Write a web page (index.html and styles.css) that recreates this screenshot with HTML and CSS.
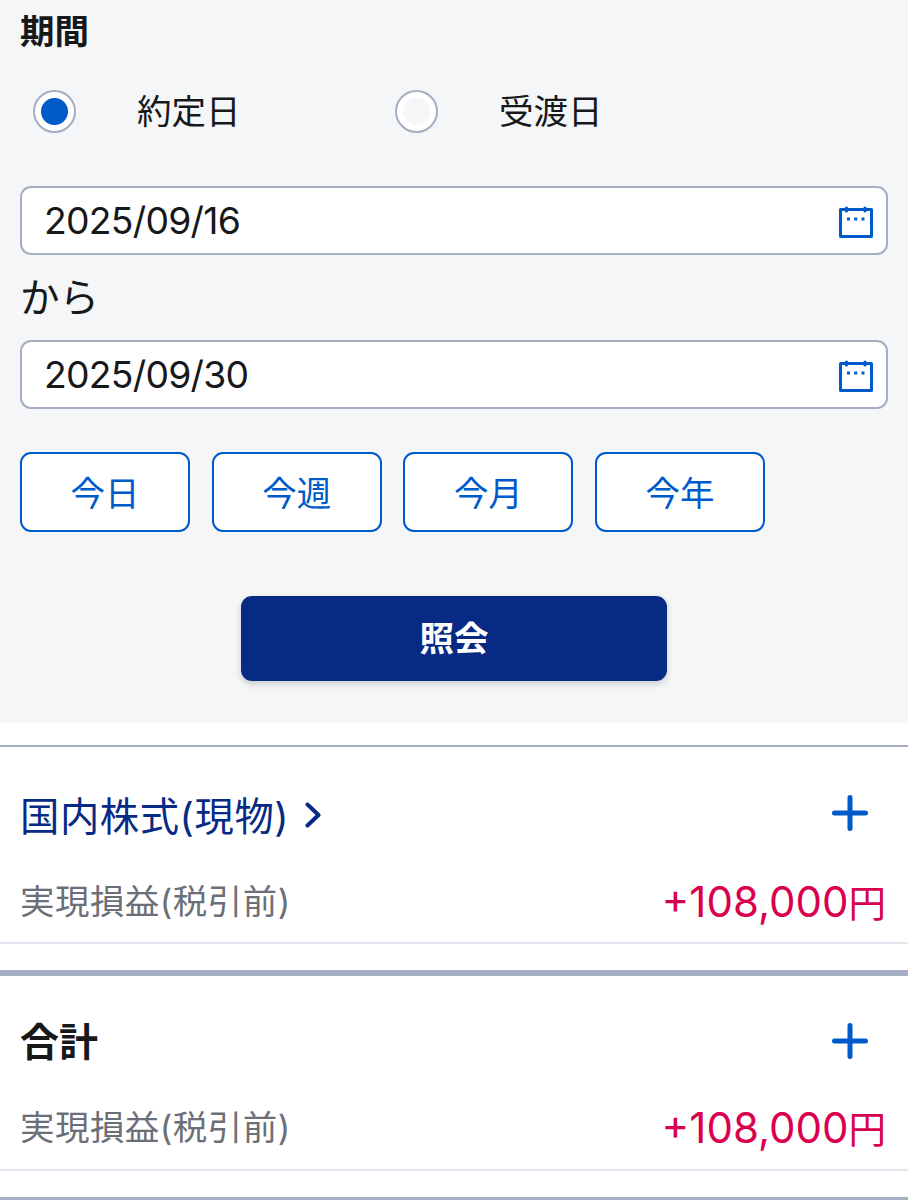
FILE: index.html
```
<!DOCTYPE html>
<html lang="ja">
<head>
    <meta charset="utf-8">
    <title>実現損益</title>
    <link rel="stylesheet" href="styles.css">
</head>
<body>
    <form class="search-form">
        <h3 class="form-title">期間</h3>
        <div class="radio-group">
            <label class="radio-label"><input type="radio" name="dateType" checked><span>約定日</span></label>
            <label class="radio-label"><input type="radio" name="dateType"><span>受渡日</span></label>
        </div>
        <div class="date-field">
            <input type="text" value="2025/09/16">
            <svg class="calendar-icon" width="34" height="34" viewBox="0 0 34 34">
                <path d="M1.5 4.5H32.5V31.5H1.5Z" fill="none" stroke="#005bca" stroke-width="3" stroke-linejoin="round"/>
                <path d="M7.5 3V6M26 3V6" stroke="#005bca" stroke-width="3.2" stroke-linecap="round"/>
                <path d="M8 12.5h3v3h-3zM15.2 12.5h3v3h-3zM22.5 12.5h3v3h-3z" fill="#005bca"/>
            </svg>
        </div>
        <div class="date-separator">から</div>
        <div class="date-field">
            <input type="text" value="2025/09/30">
            <svg class="calendar-icon" width="34" height="34" viewBox="0 0 34 34">
                <path d="M1.5 4.5H32.5V31.5H1.5Z" fill="none" stroke="#005bca" stroke-width="3" stroke-linejoin="round"/>
                <path d="M7.5 3V6M26 3V6" stroke="#005bca" stroke-width="3.2" stroke-linecap="round"/>
                <path d="M8 12.5h3v3h-3zM15.2 12.5h3v3h-3zM22.5 12.5h3v3h-3z" fill="#005bca"/>
            </svg>
        </div>
        <div class="button-group">
            <button type="button">今日</button>
            <button type="button">今週</button>
            <button type="button">今月</button>
            <button type="button">今年</button>
        </div>
        <button type="button" class="submit-button">照会</button>
    </form>

    <section class="result">
        <div class="result-header">
            <a class="result-link">国内株式(現物)
                <svg width="16" height="26" viewBox="0 0 16 26">
                    <path d="M2.5 2.5L13.5 13L2.5 23.5" fill="none" stroke="#072a84" stroke-width="4" stroke-linecap="round" stroke-linejoin="round"/>
                </svg>
            </a>
            <svg class="plus-icon" width="36" height="36" viewBox="0 0 36 36">
                <path d="M18 2.5V33.5M2.5 18H33.5" stroke="#005bca" stroke-width="5" stroke-linecap="round"/>
            </svg>
        </div>
        <div class="result-row">
            <span class="result-label">実現損益(税引前)</span>
            <span class="amount">+108,000<span class="yen">円</span></span>
        </div>
    </section>

    <section class="result total">
        <div class="result-header">
            <h3>合計</h3>
            <svg class="plus-icon" width="36" height="36" viewBox="0 0 36 36">
                <path d="M18 2.5V33.5M2.5 18H33.5" stroke="#005bca" stroke-width="5" stroke-linecap="round"/>
            </svg>
        </div>
        <div class="result-row">
            <span class="result-label">実現損益(税引前)</span>
            <span class="amount">+108,000<span class="yen">円</span></span>
        </div>
    </section>
    <hr class="end-line">
</body>
</html>
```
FILE: styles.css
```
* {
    box-sizing: border-box;
}
body {
    margin: 0;
    height: 1200px;
    overflow: hidden;
    background: #fff;
    color: #17181a;
    font-family: Inter, "Noto Sans CJK JP", sans-serif;
    font-size: 34.5px;
}
h3 {
    margin: 0;
    font-weight: 700;
}
input,
button {
    font-family: inherit;
    color: inherit;
}
.search-form {
    height: 723px;
    padding: 7px 20px 0;
    background: #f4f6f8;
}
.form-title {
    font-size: 34.5px;
    line-height: 50px;
}
.radio-group {
    display: flex;
    margin: 29px 0 50px;
    padding-left: 13px;
}
.radio-label {
    display: flex;
    align-items: center;
    gap: 61px;
    width: 362px;
    height: 50px;
}
.radio-label span {
    padding-bottom: 4px;
}
.radio-label input {
    appearance: none;
    width: 43px;
    height: 43px;
    margin: 0;
    border: 2px solid #a5aec2;
    border-radius: 50%;
    background: radial-gradient(circle, #f4f6f8 13px, #fff 14px);
}
.radio-label input:checked {
    background: radial-gradient(circle, #005bca 13px, #fff 14px);
}
.date-field {
    display: flex;
    align-items: center;
    justify-content: space-between;
    height: 69px;
    padding: 0 13px 0 22px;
    border: 2px solid #a5aec2;
    border-radius: 11px;
    background: #fff;
}
.date-field input {
    width: 400px;
    padding: 0;
    border: none;
    background: none;
    font-size: 37.3px;
    letter-spacing: -0.75px;
}
.calendar-icon {
    margin-top: 2px;
}
.date-separator {
    height: 85px;
    font-size: 39.5px;
    line-height: 87px;
}
.button-group {
    display: flex;
    gap: 21.7px;
    margin-top: 43px;
}
.button-group button {
    width: 170px;
    height: 80px;
    padding: 0 0 3px;
    border: 2px solid #005bca;
    border-radius: 11px;
    background: #fff;
    color: #005bca;
    font-size: 34.5px;
}
.submit-button {
    display: block;
    width: 426px;
    height: 85px;
    margin: 64px auto 0;
    padding: 0 0 5px;
    border: none;
    border-radius: 11px;
    background: #072a84;
    box-shadow: 0 3px 7px rgba(0,0,0,0.18);
    color: #fff;
    font-size: 34.5px;
    font-weight: 700;
}
.result {
    height: 199px;
    margin-top: 22px;
    border-top: 2px solid #a5aec2;
    border-bottom: 2px solid #e3e6ef;
}
.result-header {
    display: flex;
    align-items: center;
    justify-content: space-between;
    height: 60px;
    margin-top: 36px;
    padding: 0 40px 0 20px;
    font-size: 39px;
}
.result-header h3 {
    font-size: 39px;
}
.result-link {
    display: flex;
    align-items: center;
    gap: 16px;
    color: #072a84;
    font-size: 39.3px;
    letter-spacing: 0.6px;
}
.result-link svg {
    margin-top: 4px;
}
.result-row {
    display: flex;
    align-items: center;
    justify-content: space-between;
    height: 60px;
    margin-top: 26px;
    padding: 0 22px 0 20px;
}
.result-label {
    color: #6b6f78;
    letter-spacing: 0.45px;
}
.amount {
    margin-top: 2px;
    color: #d9004f;
    font-size: 42px;
}
.yen {
    font-size: 37.5px;
}
.total {
    height: 201px;
    margin-top: 26px;
    border-top: 6px solid #a5aec2;
}
.total .result-header {
    margin-top: 33px;
}
.total .plus-icon {
    margin-top: 4px;
}
.end-line {
    height: 3px;
    margin: 26px 0 0;
    border: none;
    background: #a5aec2;
}
```
